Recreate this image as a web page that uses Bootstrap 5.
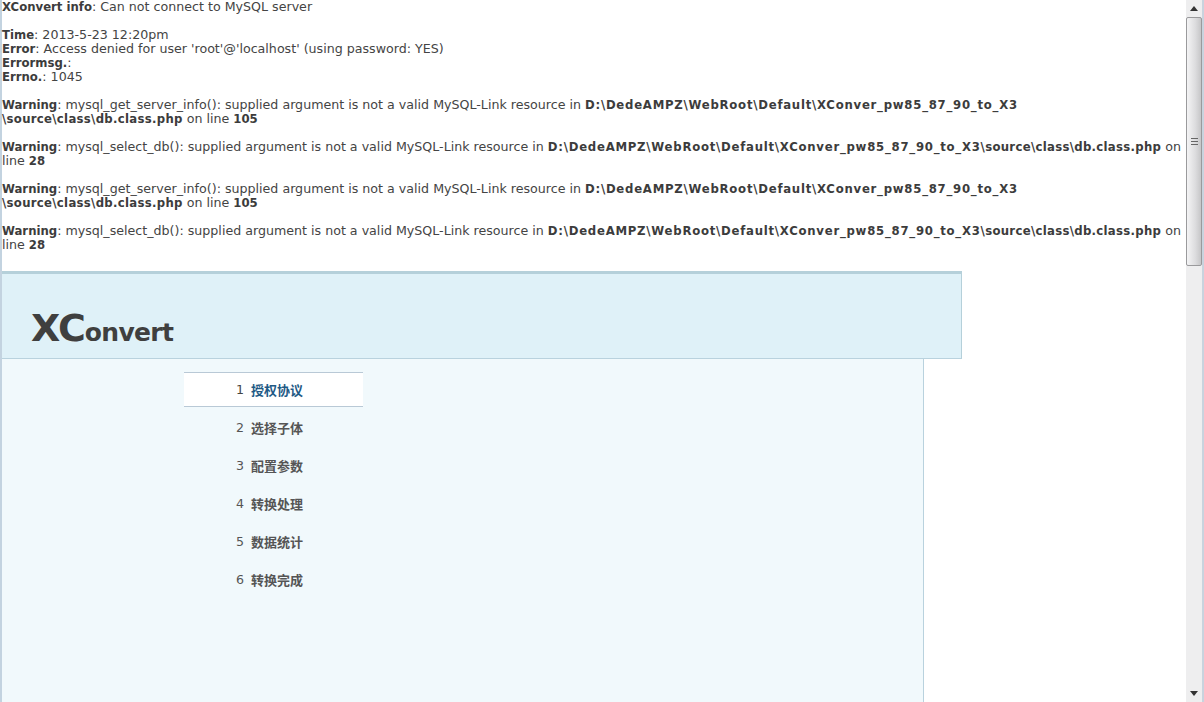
<!DOCTYPE html>
<html lang="zh">
<head>
<meta charset="utf-8">
<title>XConvert</title>
<link href="https://cdn.jsdelivr.net/npm/bootstrap@5.3.0/dist/css/bootstrap.min.css" rel="stylesheet">
<style>
html,body{height:702px;overflow:hidden;margin:0;background:#fff}
body{font:12.65px/14px "DejaVu Sans",sans-serif;color:#444}
.win{height:702px;border-left:2px solid #c3d3e0;border-right:2px solid #c9d3de}
.pagearea{width:1184px;min-width:0}
.msg{margin:0 0 14px 0;white-space:nowrap}
.msg:nth-child(6){margin-bottom:19px}
.msg b{font-weight:700;font-size:11.7px;color:#3c3c3c}
.msg .wpath{letter-spacing:.75px}
.msg .spath{letter-spacing:.3px}
.xhead{width:960px;height:88px;background:#dff1f8;border-top:3px solid #b5d0da;border-right:1px solid #b5d0da;border-bottom:1px solid #b9d2de;padding:34px 0 0 29px}
.xlogo{font:700 25px/40px "DejaVu Sans",sans-serif;color:#3f3f3f;margin:0;letter-spacing:-.7px}
.xlogo span{font-size:38px;letter-spacing:-1px}
.xbody{width:922px;height:343px;background:#f1f9fc;border-right:1px solid #b9d2de;padding:13px 0 0 182px}
.xsteps{width:179px;margin:0;padding:0;list-style:none}
.xsteps li{height:38px;display:flex;align-items:center;justify-content:center;gap:7px;font-size:12.6px;color:#555;padding-right:8px}
.xsteps li b{font-family:"Noto Sans CJK SC",sans-serif;font-weight:700;font-size:13px}
.xsteps li i{font-style:normal;font-weight:400}
.xsteps li.on{height:35px;margin-bottom:2px;background:#fff;border-top:1px solid #b9c9d6;border-bottom:1px solid #b9c9d6;color:#1f5a85}
.xsteps li.on i{color:#444}
.sbar{width:16px;background:#eeeeef;display:flex;flex-direction:column;align-items:stretch}
.sbtn{height:17px;display:flex;align-items:center;justify-content:center}
.sthumb{height:249px;background:linear-gradient(90deg,#f4f4f5,#dcdcde 60%,#c6c6c8);border:1px solid #9a9a9c;border-radius:2px;display:flex;align-items:center;justify-content:center}
.sgap{flex:1}
</style>
</head>
<body>
<div class="win d-flex justify-content-between">
  <div class="pagearea">
    <p class="msg"><b>XConvert info</b>: Can not connect to MySQL server</p>
    <p class="msg"><b>Time</b>: 2013-5-23 12:20pm<br><b>Error</b>: Access denied for user 'root'@'localhost' (using password: YES)<br><b>Errormsg.</b>:<br><b>Errno.</b>: 1045</p>
    <p class="msg"><b>Warning</b>: mysql_get_server_info(): supplied argument is not a valid MySQL-Link resource in <b class="wpath">D:\DedeAMPZ\WebRoot\Default\XConver_pw85_87_90_to_X3</b><br><b class="spath">\source\class\db.class.php</b> on line <b>105</b></p>
    <p class="msg"><b>Warning</b>: mysql_select_db(): supplied argument is not a valid MySQL-Link resource in <b class="wpath">D:\DedeAMPZ\WebRoot\Default\XConver_pw85_87_90_to_X3</b><b class="spath">\source\class\db.class.php</b> on<br>line <b>28</b></p>
    <p class="msg"><b>Warning</b>: mysql_get_server_info(): supplied argument is not a valid MySQL-Link resource in <b class="wpath">D:\DedeAMPZ\WebRoot\Default\XConver_pw85_87_90_to_X3</b><br><b class="spath">\source\class\db.class.php</b> on line <b>105</b></p>
    <p class="msg"><b>Warning</b>: mysql_select_db(): supplied argument is not a valid MySQL-Link resource in <b class="wpath">D:\DedeAMPZ\WebRoot\Default\XConver_pw85_87_90_to_X3</b><b class="spath">\source\class\db.class.php</b> on<br>line <b>28</b></p>
    <div class="xhead"><h1 class="xlogo"><span>XC</span>onvert</h1></div>
    <div class="xbody">
      <ul class="xsteps">
        <li class="on"><i>1</i><b>授权协议</b></li>
        <li><i>2</i><b>选择子体</b></li>
        <li><i>3</i><b>配置参数</b></li>
        <li><i>4</i><b>转换处理</b></li>
        <li><i>5</i><b>数据统计</b></li>
        <li><i>6</i><b>转换完成</b></li>
      </ul>
    </div>
  </div>
  <div class="sbar">
    <div class="sbtn"><svg width="8" height="5" viewBox="0 0 8 5"><path d="M4 0 8 5H0z" fill="#333"/></svg></div>
    <div class="sthumb"><svg width="7" height="7" viewBox="0 0 7 7"><path d="M0 .5h7M0 3.5h7M0 6.5h7" stroke="#666"/></svg></div>
    <div class="sgap"></div>
    <div class="sbtn"><svg width="8" height="5" viewBox="0 0 8 5"><path d="M0 0H8L4 5z" fill="#333"/></svg></div>
  </div>
</div>
</body>
</html>
